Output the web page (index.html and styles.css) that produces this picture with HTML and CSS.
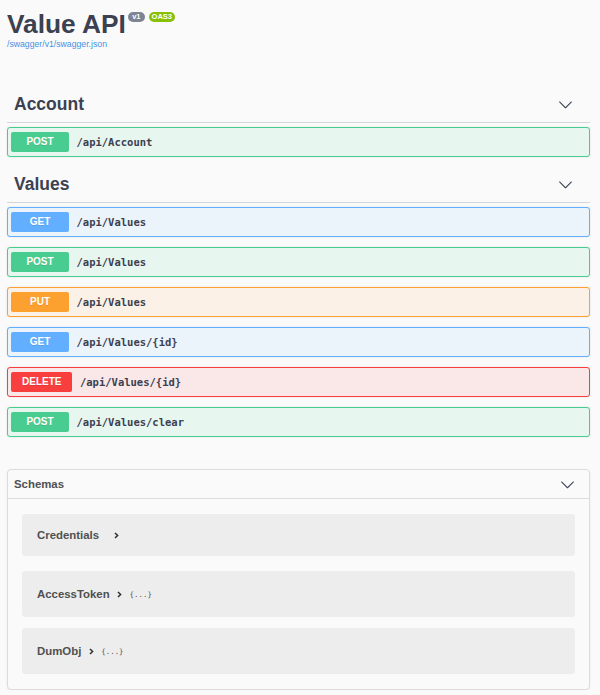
FILE: index.html
```html
<!DOCTYPE html>
<html lang="en">
<head>
<meta charset="utf-8">
<title>Value API</title>
<link rel="stylesheet" href="styles.css">
</head>
<body>
<div class="page">
  <div class="info">
    <h1 class="title"><span class="title-text">Value API</span><span class="badge badge-version">v1</span><span class="badge badge-oas">OAS3</span></h1>
    <a class="url" href="#">/swagger/v1/swagger.json</a>
  </div>

  <section class="tag-section">
    <div class="tag">
      <h3 class="tag-name">Account</h3>
      <svg class="arrow" viewBox="0 0 20 20" width="15" height="15"><path d="M17.418 6.109c.272-.268.709-.268.979 0s.271.701 0 .969l-7.908 7.83c-.27.268-.707.268-.979 0l-7.908-7.830c-.27-.268-.27-.701 0-.969.271-.268.709-.268.979 0L10 13.25l7.418-7.141z"/></svg>
    </div>
    <div class="op op-post"><span class="method">POST</span><span class="path">/api/Account</span></div>
  </section>

  <section class="tag-section">
    <div class="tag">
      <h3 class="tag-name">Values</h3>
      <svg class="arrow" viewBox="0 0 20 20" width="15" height="15"><path d="M17.418 6.109c.272-.268.709-.268.979 0s.271.701 0 .969l-7.908 7.83c-.27.268-.707.268-.979 0l-7.908-7.830c-.27-.268-.27-.701 0-.969.271-.268.709-.268.979 0L10 13.25l7.418-7.141z"/></svg>
    </div>
    <div class="op op-get"><span class="method">GET</span><span class="path">/api/Values</span></div>
    <div class="op op-post"><span class="method">POST</span><span class="path">/api/Values</span></div>
    <div class="op op-put"><span class="method">PUT</span><span class="path">/api/Values</span></div>
    <div class="op op-get"><span class="method">GET</span><span class="path">/api/Values/{id}</span></div>
    <div class="op op-delete"><span class="method">DELETE</span><span class="path">/api/Values/{id}</span></div>
    <div class="op op-post"><span class="method">POST</span><span class="path">/api/Values/clear</span></div>
  </section>

  <section class="models">
    <div class="models-head">
      <h4 class="models-title">Schemas</h4>
      <svg class="arrow" viewBox="0 0 20 20" width="15" height="15"><path d="M17.418 6.109c.272-.268.709-.268.979 0s.271.701 0 .969l-7.908 7.83c-.27.268-.707.268-.979 0l-7.908-7.830c-.27-.268-.27-.701 0-.969.271-.268.709-.268.979 0L10 13.25l7.418-7.141z"/></svg>
    </div>
    <div class="models-body">
      <div class="model model-short">
        <span class="model-title model-title-wide">Credentials</span>
        <svg class="caret" viewBox="0 0 5 7" width="5" height="7"><path d="M1 1l2.6 2.5L1 6"/></svg>
      </div>
      <div class="model">
        <span class="model-title">AccessToken</span>
        <svg class="caret" viewBox="0 0 5 7" width="5" height="7"><path d="M1 1l2.6 2.5L1 6"/></svg>
        <span class="model-hint">{...}</span>
      </div>
      <div class="model">
        <span class="model-title">DumObj</span>
        <svg class="caret" viewBox="0 0 5 7" width="5" height="7"><path d="M1 1l2.6 2.5L1 6"/></svg>
        <span class="model-hint">{...}</span>
      </div>
    </div>
  </section>
</div>
</body>
</html>
```

FILE: styles.css
```css
* { box-sizing: border-box; }

html, body {
  margin: 0;
  padding: 0;
  background: #fafafa;
  font-family: "Liberation Sans", Arial, sans-serif;
  color: #3b4151;
}

.page {
  padding: 0 10px 0 7px;
}

.info {
  padding-top: 9px;
  margin-bottom: 37px;
}

.title {
  display: flex;
  align-items: flex-start;
  margin: 0;
  height: 30px;
  font-size: 26.3px;
  line-height: 30px;
  font-weight: 700;
  color: #3b4151;
}

.title-text {
  margin-right: 2px;
}

.badge {
  margin-top: 3px;
  height: 10px;
  border-radius: 40px;
  font-size: 7.5px;
  line-height: 10px;
  font-weight: 700;
  color: #fff;
}

.badge-version {
  background: #7d8492;
  padding: 0 4.3px;
  margin-right: 4px;
}

.badge-oas {
  background: #89bf04;
  padding: 0 2.8px;
}

.url {
  display: block;
  font-size: 8.7px;
  line-height: 11px;
  color: #4990e2;
  text-decoration: none;
}

.tag {
  display: flex;
  align-items: center;
  justify-content: space-between;
  height: 36px;
  padding: 0 17px 0 7px;
  border-bottom: 1px solid rgba(59, 65, 81, 0.2);
  margin-bottom: 4px;
}

.tag-name {
  margin: 0;
  font-size: 17.5px;
  font-weight: 700;
  color: #3b4151;
}

.arrow {
  display: block;
  fill: #3b4151;
}

.op {
  display: flex;
  align-items: center;
  height: 30px;
  padding: 0 3px;
  margin-bottom: 10px;
  border: 1px solid;
  border-radius: 3px;
  box-shadow: 0 0 2px rgba(0, 0, 0, 0.12);
}

.method {
  min-width: 58px;
  height: 20px;
  padding: 0 11px;
  border-radius: 2px;
  font-size: 10px;
  line-height: 20px;
  font-weight: 700;
  text-align: center;
  color: #fff;
  text-shadow: 0 1px 0 rgba(0, 0, 0, 0.1);
}

.path {
  padding-left: 7.5px;
  font-family: "DejaVu Sans Mono", "Liberation Mono", monospace;
  font-size: 10.5px;
  font-weight: 700;
  color: #3b4151;
}

.op-get { background: #ebf3fb; border-color: #61affe; }
.op-get .method { background: #61affe; }
.op-post { background: #e8f6f0; border-color: #49cc90; }
.op-post .method { background: #49cc90; }
.op-put { background: #fbf1e6; border-color: #fca130; }
.op-put .method { background: #fca130; }
.op-delete { background: #fae7e7; border-color: #f93e3e; }
.op-delete .method { background: #f93e3e; }

.models {
  margin-top: 32px;
  border: 1px solid #dcdcdc;
  border-radius: 4px;
  box-shadow: 0 1px 2px rgba(0, 0, 0, 0.08);
}

.models-head {
  display: flex;
  align-items: center;
  justify-content: space-between;
  height: 29px;
  padding: 0 14px 0 6px;
  border-bottom: 1px solid #dcdcdc;
}

.models-title {
  margin: 0;
  font-size: 11.4px;
  font-weight: 700;
  color: #505050;
}

.models-body {
  padding: 15px 14px 4px;
}

.model {
  display: flex;
  align-items: center;
  height: 46px;
  padding: 0 15px;
  margin-bottom: 11px;
  background: #ededed;
  border-radius: 3px;
}

.model-short {
  height: 42px;
  margin-bottom: 15px;
}

.model-title {
  font-size: 11.4px;
  font-weight: 700;
  color: #505050;
}

.model-title-wide {
  margin-right: 7.5px;
}

.caret {
  display: block;
  margin-left: 7.5px;
  fill: none;
  stroke: #303030;
  stroke-width: 1.5;
}

.model-hint {
  margin-left: 7.5px;
  font-family: "DejaVu Sans Mono", "Liberation Mono", monospace;
  font-size: 7.4px;
  color: #555;
}
```
